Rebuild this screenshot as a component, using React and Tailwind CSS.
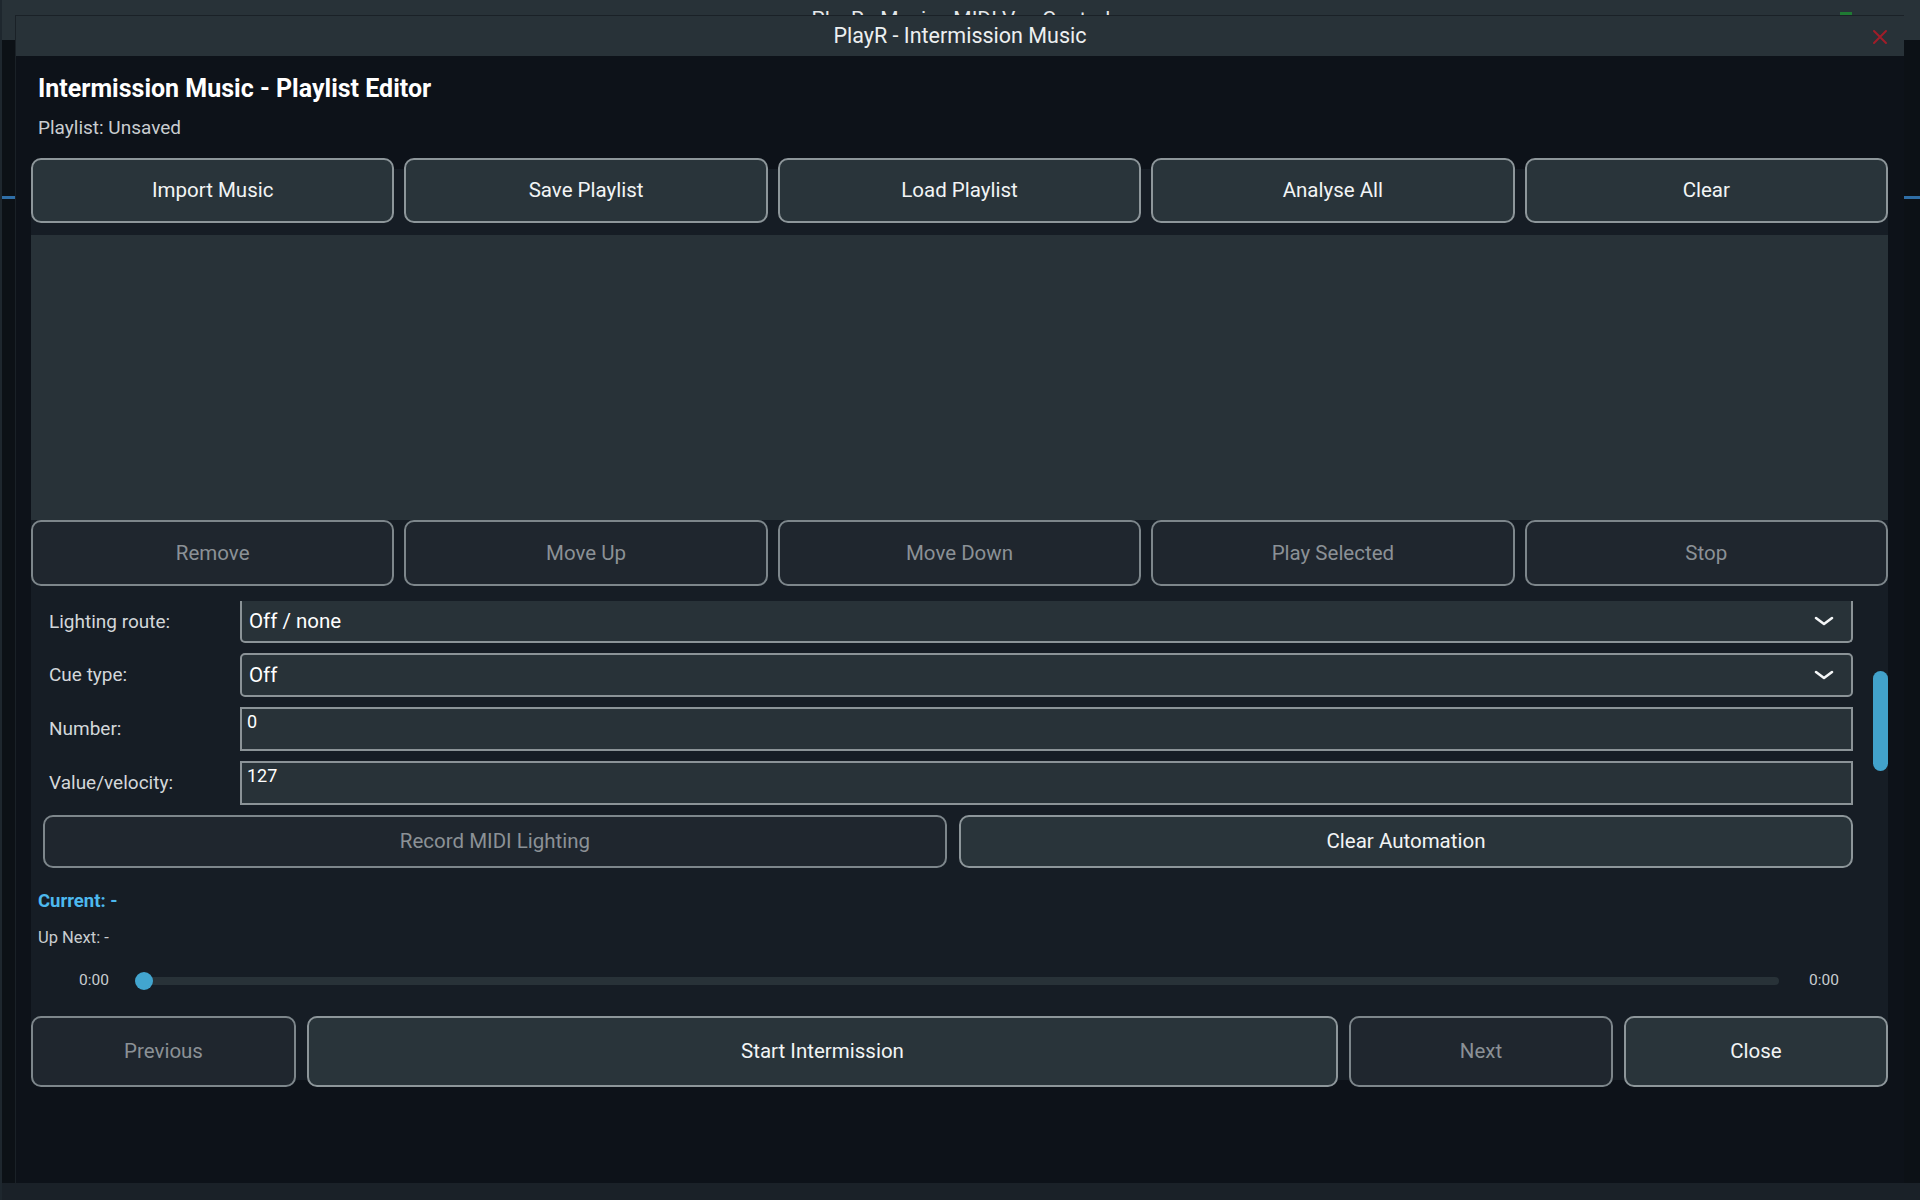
import React from 'react';

const FONT = { fontFamily: 'Roboto, "Noto Sans", "Liberation Sans", sans-serif' };

function Btn({ children, disabled, className = '' }) {
  return (
    <button
      className={`rounded-[10px] border-2 text-[20.5px] ${disabled
        ? 'bg-[#1f262e] border-[#7d868b] text-[#8b9196]'
        : 'bg-[#29343a] border-[#8d969a] text-[#f2f4f5]'} ${className}`}
    >
      {children}
    </button>
  );
}

function Chevron() {
  return (
    <svg width="22" height="12" viewBox="0 0 22 12" fill="none">
      <polyline points="3,3 11,9 19,3" stroke="#f4f6f7" strokeWidth="2.6" strokeLinecap="round" strokeLinejoin="round" />
    </svg>
  );
}

function Row({ label, children }) {
  return (
    <div className="flex items-center">
      <div className="w-[197px] shrink-0 pl-[6px] text-[19px] text-[#d3d7da]">{label}</div>
      <div className="flex-1">{children}</div>
    </div>
  );
}

function Select({ value, first }) {
  return (
    <div className={`flex items-center justify-between bg-[#283238] border-2 border-[#8b9397] rounded-[5px] pl-[7px] pr-[16px] text-[20.5px] text-white ${first ? 'h-[42px] border-t-0 rounded-t-none' : 'h-[44px]'}`}>
      <span>{value}</span>
      <Chevron />
    </div>
  );
}

function Field({ value }) {
  return (
    <div className="h-[44px] bg-[#283238] border-2 border-[#8b9397] pl-[5px] pt-[2px] text-[18px] leading-[22px] text-white">
      {value}
    </div>
  );
}

export default function App() {
  return (
    <div style={FONT} className="relative w-[1920px] h-[1200px] overflow-hidden bg-[#0c1116]">
      {/* app behind the dialog */}
      <div className="flex flex-col h-full border-l-2 border-[#1e272e]">
        <div className="h-[40px] bg-[#283238] flex items-center justify-center text-[21px] text-[#e4e7e9] relative">
          PlayR - Music - MIDI Vox Control
          <div className="absolute right-[68px] bottom-[25px] w-[12px] h-[3px] bg-[#1f7a33]" />
        </div>
        <div className="mt-[156px] h-[3px] bg-[#2f6ea6]" />
        <div className="flex-1" />
        <div className="h-[17px] bg-[#1a2128]" />
      </div>

      {/* dialog */}
      <div className="absolute left-[15px] top-[15px] w-[1889px] h-[1168px] bg-[#0d1219] border-t border-l border-[#1a2127] flex flex-col">
        <div className="relative h-[40px] shrink-0 bg-[#283238] flex items-center justify-center text-[21.5px] text-[#eceff0]">
          PlayR - Intermission Music
          <svg className="absolute right-[16px] top-[13px]" width="16" height="16" viewBox="0 0 16 16">
            <path d="M2 2 L14 14 M14 2 L2 14" stroke="#a01d29" strokeWidth="2" strokeLinecap="round" />
          </svg>
        </div>

        <div className="pl-[15px] pr-[16px]">
          <h1 className="pl-[7px] mt-[18px] text-[25px] leading-[30px] font-bold text-white">
            Intermission Music - Playlist Editor
          </h1>
          <p className="pl-[7px] mt-[13px] text-[19px] leading-[22px] text-[#c9cdd0]">Playlist: Unsaved</p>

          <div className="mt-[19px] bg-[linear-gradient(to_bottom,transparent_11px,#161d25_11px,#161d25_calc(100%-7px),transparent_calc(100%-7px))]">
            <div className="grid grid-cols-5 gap-[10px] h-[65px]">
              <Btn>Import Music</Btn>
              <Btn>Save Playlist</Btn>
              <Btn>Load Playlist</Btn>
              <Btn>Analyse All</Btn>
              <Btn>Clear</Btn>
            </div>

            <div className="mt-[12px] h-[285px] bg-[#283238]" />

            <div className="grid grid-cols-5 gap-[10px] h-[66px]">
              <Btn disabled>Remove</Btn>
              <Btn disabled>Move Up</Btn>
              <Btn disabled>Move Down</Btn>
              <Btn disabled>Play Selected</Btn>
              <Btn disabled>Stop</Btn>
            </div>

            <div className="mt-[15px] h-[277px] flex overflow-hidden">
              <div className="flex-1 pl-[12px] pr-[20px] flex flex-col gap-[10px]">
                <Row label="Lighting route:"><Select value="Off / none" first /></Row>
                <Row label="Cue type:"><Select value="Off" /></Row>
                <Row label="Number:"><Field value="0" /></Row>
                <Row label="Value/velocity:"><Field value="127" /></Row>
                <div className="grid grid-cols-[904px_1fr] gap-[12px] h-[53px]">
                  <Btn disabled>Record MIDI Lighting</Btn>
                  <Btn>Clear Automation</Btn>
                </div>
              </div>
              <div className="w-[15px] shrink-0 pt-[70px]">
                <div className="h-[100px] rounded-full bg-[#42a2cb]" />
              </div>
            </div>

            <div className="pl-[7px] pt-[12px] text-[18.5px] leading-[22px] font-bold text-[#4db9ef]">Current: -</div>
            <div className="pl-[7px] mt-[16px] text-[16.5px] leading-[19px] text-[#c9cdd0]">Up Next: -</div>

            <div className="mt-[25px] h-[18px] flex items-center pl-[48px] pr-[48px] text-[15.5px] text-[#c9cdd0]">
              <span className="w-[31px]">0:00</span>
              <div className="relative flex-1 ml-[25px] mr-[21px] h-[18px] flex items-center">
                <div className="ml-[9px] mr-[9px] flex-1 h-[8px] rounded-full bg-[#283238]" />
                <div className="absolute left-0 top-0 w-[18px] h-[18px] rounded-full bg-[#42a5cf]" />
              </div>
              <span className="w-[31px]">0:00</span>
            </div>

            <div className="mt-[26px] grid grid-cols-[265px_1fr_264px_264px] gap-[11px] h-[71px]">
              <Btn disabled>Previous</Btn>
              <Btn>Start Intermission</Btn>
              <Btn disabled>Next</Btn>
              <Btn>Close</Btn>
            </div>
          </div>
        </div>
      </div>
    </div>
  );
}
